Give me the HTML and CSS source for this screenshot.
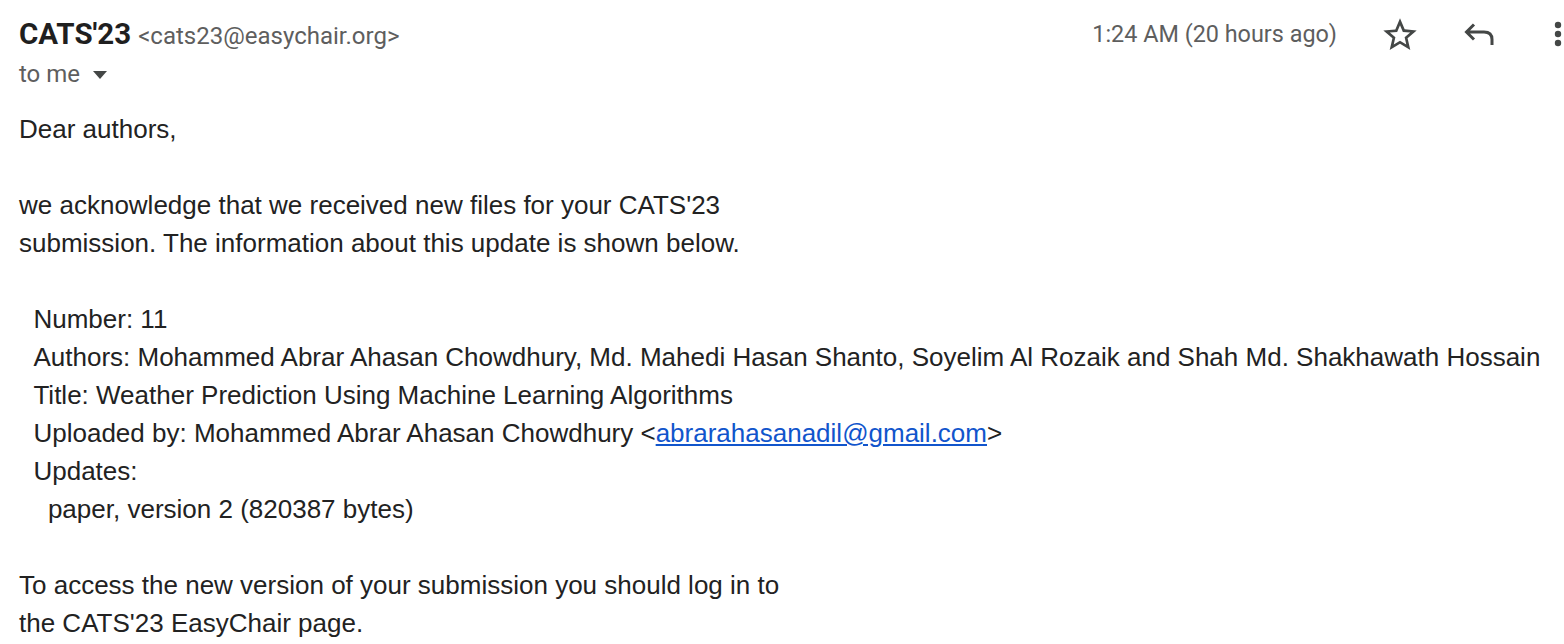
FILE: index.html
```html
<!DOCTYPE html>
<html>
<head>
<meta charset="utf-8">
<link rel="stylesheet" href="styles.css">
</head>
<body>
<div class="mail">
  <div class="head">
    <div class="row1">
      <div class="from">
        <span class="name">CATS'23</span>
        <span class="addr">&lt;cats23@easychair.org&gt;</span>
      </div>
      <div class="meta">
        <span class="time">1:24 AM (20 hours ago)</span>
        <svg class="star" width="40" height="40" viewBox="0 0 24 24"><path fill="#444746" d="M22 9.24l-7.19-.62L12 2 9.19 8.63 2 9.24l5.46 4.73L5.82 21 12 17.27 18.18 21l-1.63-7.03L22 9.24zM12 15.4l-3.76 2.27 1-4.28-3.32-2.88 4.38-.38L12 6.1l1.71 4.04 4.38.38-3.32 2.88 1 4.28L12 15.4z"/></svg>
        <svg class="reply" width="32" height="24" viewBox="0 0 32 24"><path fill="none" stroke="#444746" stroke-width="3" d="M10 2.5L2.5 10 10 17.5M2.5 10H20Q28 10 28 17.5V23"/></svg>
        <svg class="more" width="10" height="26" viewBox="0 0 10 26"><circle cx="5" cy="4" r="3.2" fill="#444746"/><circle cx="5" cy="13" r="3.2" fill="#444746"/><circle cx="5" cy="22" r="3.2" fill="#444746"/></svg>
      </div>
    </div>
    <div class="row2">
      <span class="tome">to me</span>
      <span class="caret"></span>
    </div>
  </div>
  <div class="body">Dear authors,

we acknowledge that we received new files for your CATS'23
submission. The information about this update is shown below.

  Number: 11
  Authors: Mohammed Abrar Ahasan Chowdhury, Md. Mahedi Hasan Shanto, Soyelim Al Rozaik and Shah Md. Shakhawath Hossain
  Title: Weather Prediction Using Machine Learning Algorithms
  Uploaded by: Mohammed Abrar Ahasan Chowdhury &lt;<a href="#" class="link">abrarahasanadil@gmail.com</a>&gt;
  Updates:
    paper, version 2 (820387 bytes)

To access the new version of your submission you should log in to
the CATS'23 EasyChair page.</div>
</div>
</body>
</html>
```

FILE: styles.css
```css
html, body {
  margin: 0;
  padding: 0;
  background: #ffffff;
}

.mail {
  padding: 14px 0 0 19px;
}

.head {
  display: flex;
  flex-direction: column;
  gap: 4px;
}

.row1 {
  display: flex;
  align-items: center;
  height: 40px;
}

.from {
  display: flex;
  align-items: baseline;
  gap: 7px;
  font-family: Roboto, "Liberation Sans", sans-serif;
}

.name {
  font-weight: 700;
  font-size: 29.5px;
  color: #1f1f1f;
}

.addr {
  font-size: 24px;
  color: #5e5e5e;
}

.meta {
  margin-left: auto;
  display: flex;
  align-items: center;
  height: 40px;
}

.time {
  font-family: Roboto, "Liberation Sans", sans-serif;
  font-size: 23.4px;
  color: #5e5e5e;
  margin-right: 43px;
}

.star {
  margin-right: 44px;
  margin-top: 2px;
}

.reply {
  margin-right: 57px;
}

.more {
  margin-right: 1px;
}

.row2 {
  display: flex;
  align-items: center;
  height: 32px;
  gap: 13px;
}

.tome {
  font-family: Roboto, "Liberation Sans", sans-serif;
  font-size: 24px;
  color: #5e5e5e;
}

.caret {
  width: 0;
  height: 0;
  border-left: 7px solid transparent;
  border-right: 7px solid transparent;
  border-top: 8px solid #444746;
  margin-top: 2px;
}

.body {
  margin-top: 20px;
  white-space: pre-wrap;
  font-family: "Liberation Sans", Arial, sans-serif;
  font-size: 26px;
  line-height: 38px;
  color: #222222;
}

.link {
  color: #1155cc;
  text-decoration: underline;
}
```
